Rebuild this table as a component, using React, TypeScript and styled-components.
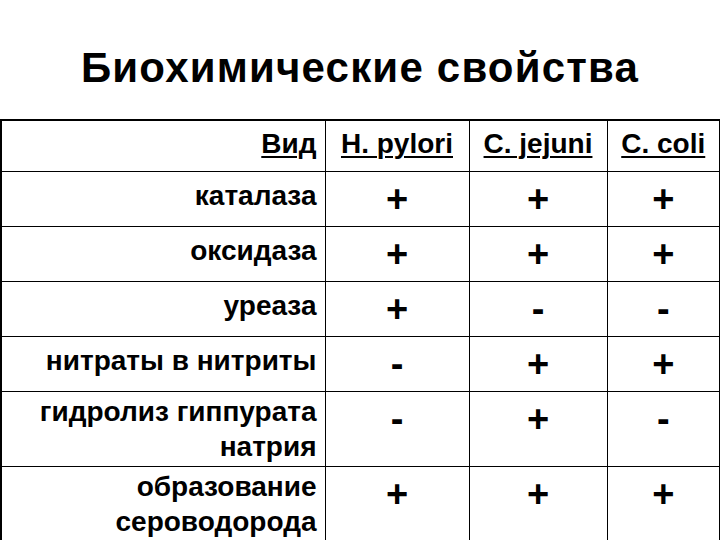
import styled, { createGlobalStyle } from "styled-components"

const GlobalStyle = createGlobalStyle`
  html, body {
    margin: 0;
    padding: 0;
    background: #ffffff;
  }
  body {
    font-family: "Liberation Sans", Arial, sans-serif;
    color: #000000;
    overflow: hidden;
  }
`

const COLUMNS = ["H. pylori", "C. jejuni", "C. coli"]

const ROWS: { label: string[]; values: string[]; tall?: boolean }[] = [
  { label: ["каталаза"], values: ["+", "+", "+"] },
  { label: ["оксидаза"], values: ["+", "+", "+"] },
  { label: ["уреаза"], values: ["+", "-", "-"] },
  { label: ["нитраты в нитриты"], values: ["-", "+", "+"] },
  { label: ["гидролиз гиппурата", "натрия"], values: ["-", "+", "-"], tall: true },
  { label: ["образование", "сероводорода"], values: ["+", "+", "+"], tall: true },
]

export default function App() {
  return (
    <Page>
      <GlobalStyle />
      <Title>Биохимические свойства</Title>
      <Table>
        <colgroup>
          <col style={{ width: 324 }} />
          <col style={{ width: 144 }} />
          <col style={{ width: 138 }} />
          <col style={{ width: 113 }} />
        </colgroup>
        <thead>
          <HeadRow>
            <HeadCell $align="right">
              <u>Вид</u>
            </HeadCell>
            {COLUMNS.map((c) => (
              <HeadCell key={c} $align="center">
                <u>{c}</u>
              </HeadCell>
            ))}
          </HeadRow>
        </thead>
        <tbody>
          {ROWS.map((r) => (
            <BodyRow key={r.label.join(" ")} $tall={r.tall}>
              <LabelCell $multi={r.label.length > 1}>
                {r.label.map((l) => (
                  <div key={l}>{l}</div>
                ))}
              </LabelCell>
              {r.values.map((v, i) => (
                <SignCell key={i}>{v}</SignCell>
              ))}
            </BodyRow>
          ))}
        </tbody>
      </Table>
    </Page>
  )
}

const Page = styled.div`
  width: 720px;
  height: 540px;
  overflow: hidden;
`

const Title = styled.h1`
  margin: 0;
  height: 119px;
  box-sizing: border-box;
  padding-top: 47px;
  text-align: center;
  font-size: 42px;
  line-height: 42px;
  font-weight: bold;
  letter-spacing: 1.2px;
`

const Table = styled.table`
  width: 719px;
  border-collapse: collapse;
  table-layout: fixed;
  border-top: 2px solid #000;
  border-left: 2px solid #000;
  border-right: 2px solid #000;
`

const HeadRow = styled.tr`
  height: 51px;
`

const HeadCell = styled.th<{ $align: "right" | "center" }>`
  border: 1px solid #000;
  border-top: none;
  font-weight: bold;
  font-size: 28px;
  text-align: ${({ $align }) => $align};
  padding: 0 8px 4px;
  vertical-align: middle;
  u {
    text-decoration-thickness: 2px;
    text-underline-offset: 3px;
  }
`

const BodyRow = styled.tr<{ $tall?: boolean }>`
  height: ${({ $tall }) => ($tall ? "75px" : "55px")};
`

const LabelCell = styled.td<{ $multi: boolean }>`
  border: 1px solid #000;
  text-align: right;
  padding: ${({ $multi }) => ($multi ? "2px" : "6px")} 8px 0 0;
  vertical-align: top;
  font-weight: bold;
  font-size: 28px;
  line-height: 35px;
`

const SignCell = styled.td`
  border: 1px solid #000;
  text-align: center;
  vertical-align: top;
  padding-top: 8px;
  font-weight: bold;
  font-size: 38px;
  line-height: 38px;
`
